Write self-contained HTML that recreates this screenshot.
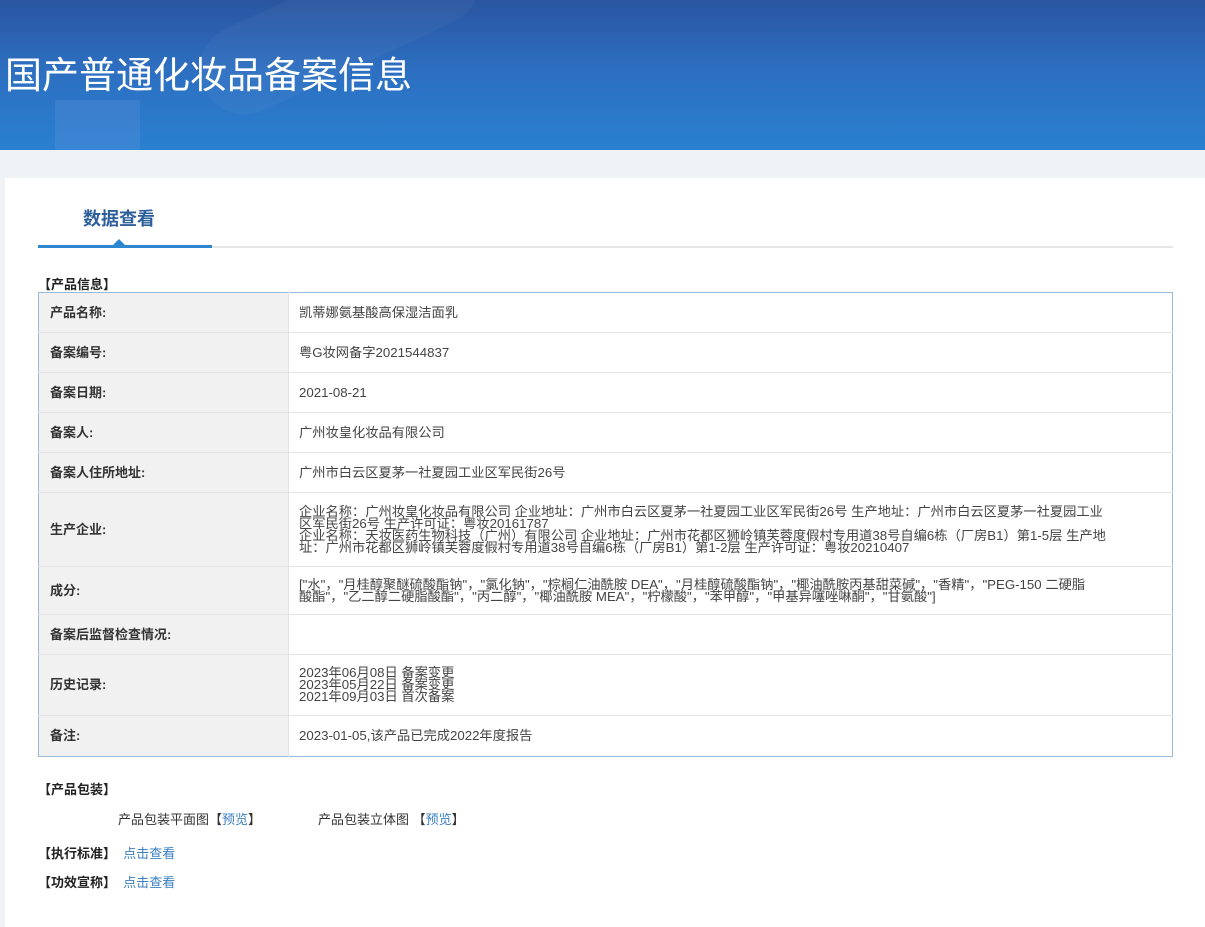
<!DOCTYPE html>
<html><head><meta charset="utf-8"><style>
*{margin:0;padding:0;box-sizing:border-box}
body{width:1205px;height:927px;overflow:hidden;background:#eff3f6;font-family:"Liberation Sans","Noto Sans CJK SC",sans-serif;font-size:13px;color:#333;position:relative}
.hdr{position:absolute;left:0;top:0;width:1205px;height:150px;background:linear-gradient(180deg,#2a55a0 0%,#2d6ec0 45%,#2a80d0 100%);overflow:hidden}
.hdr .b1{position:absolute;left:190px;top:-20px;width:300px;height:90px;border-radius:50px;background:rgba(255,255,255,0.035);transform:rotate(-25deg)}
.hdr .b2{position:absolute;left:55px;top:100px;width:85px;height:60px;background:rgba(120,160,230,0.2)}
.hdr h1{position:absolute;left:5px;top:54px;font-size:37px;font-weight:normal;color:#fff;letter-spacing:0;line-height:44px;transform:scaleX(1.0);transform-origin:left}
.panel{position:absolute;left:5px;top:178px;width:1200px;height:749px;background:#fff}
.tab{position:absolute;left:83px;top:205px;font-size:18px;font-weight:bold;color:#2d5f9a}
.line{position:absolute;left:38px;top:246px;width:1135px;height:2px;background:#e6e6e6}
.line2{position:absolute;left:38px;top:245px;width:174px;height:3px;background:#2d86d0}
.tri{position:absolute;left:112px;top:239px;width:0;height:0;border-left:7px solid transparent;border-right:7px solid transparent;border-bottom:7px solid #2d86d0}
.sec{position:absolute;left:38px;font-weight:bold;color:#222}
table{position:absolute;left:38px;top:292px;width:1135px;border-collapse:collapse;border:1px solid #9ab8d8}
td{border-bottom:1px solid #e3e3e3;vertical-align:middle;line-height:12px}
td.l{width:250px;background:#f1f1f1;font-weight:bold;padding-left:11px;color:#333;border-right:1px solid #e3e3e3}
td.v{padding:0 10px;color:#444;font-size:13.25px}
a{color:#3a7fc1;text-decoration:none}
.pk{position:absolute;top:809px}
</style></head><body>
<div class="hdr"><div class="b1"></div><div class="b2"></div><h1>国产普通化妆品备案信息</h1></div>
<div class="panel"></div>
<div class="tab">数据查看</div>
<div class="line"></div><div class="line2"></div><div class="tri"></div>
<div class="sec" style="top:274px">【产品信息】</div>
<table>
<tr style="height:40px"><td class="l">产品名称:</td><td class="v">凯蒂娜氨基酸高保湿洁面乳</td></tr>
<tr style="height:40px"><td class="l">备案编号:</td><td class="v">粤G妆网备字2021544837</td></tr>
<tr style="height:40px"><td class="l">备案日期:</td><td class="v">2021-08-21</td></tr>
<tr style="height:40px"><td class="l">备案人:</td><td class="v">广州妆皇化妆品有限公司</td></tr>
<tr style="height:40px"><td class="l">备案人住所地址:</td><td class="v">广州市白云区夏茅一社夏园工业区军民街26号</td></tr>
<tr style="height:74px"><td class="l">生产企业:</td><td class="v">企业名称：广州妆皇化妆品有限公司 企业地址：广州市白云区夏茅一社夏园工业区军民街26号 生产地址：广州市白云区夏茅一社夏园工业<br>区军民街26号 生产许可证：粤妆20161787<br>企业名称：天妆医药生物科技（广州）有限公司 企业地址：广州市花都区狮岭镇芙蓉度假村专用道38号自编6栋（厂房B1）第1-5层 生产地<br>址：广州市花都区狮岭镇芙蓉度假村专用道38号自编6栋（厂房B1）第1-2层 生产许可证：粤妆20210407</td></tr>
<tr style="height:48px"><td class="l">成分:</td><td class="v">["水"，"月桂醇聚醚硫酸酯钠"，"氯化钠"，"棕榈仁油酰胺 DEA"，"月桂醇硫酸酯钠"，"椰油酰胺丙基甜菜碱"，"香精"，"PEG-150 二硬脂<br>酸酯"，"乙二醇二硬脂酸酯"，"丙二醇"，"椰油酰胺 MEA"，"柠檬酸"，"苯甲醇"，"甲基异噻唑啉酮"，"甘氨酸"]</td></tr>
<tr style="height:40px"><td class="l">备案后监督检查情况:</td><td class="v"></td></tr>
<tr style="height:61px"><td class="l">历史记录:</td><td class="v">2023年06月08日 备案变更<br>2023年05月22日 备案变更<br>2021年09月03日 首次备案</td></tr>
<tr style="height:41px"><td class="l" style="border-bottom:none">备注:</td><td class="v" style="border-bottom:none">2023-01-05,该产品已完成2022年度报告</td></tr>
</table>
<div class="sec" style="top:779px">【产品包装】</div>
<div class="pk" style="left:118px">产品包装平面图【<a>预览</a>】</div>
<div class="pk" style="left:318px">产品包装立体图 【<a>预览</a>】</div>
<div class="sec" style="top:843px">【执行标准】&nbsp; <a style="font-weight:normal">点击查看</a></div>
<div class="sec" style="top:872px">【功效宣称】&nbsp; <a style="font-weight:normal">点击查看</a></div>
</body></html>
